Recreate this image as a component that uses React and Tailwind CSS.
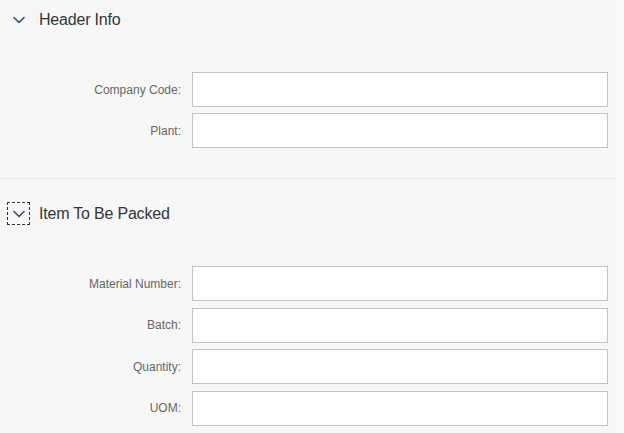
import React from 'react';

const Chevron = () => (
  <svg width="12" height="8" viewBox="0 0 12 8" fill="none">
    <path d="M1 1.5 L6 6.5 L11 1.5" stroke="#32507a" strokeWidth="1.6" strokeLinecap="round" strokeLinejoin="round" />
  </svg>
);

const Field = ({ label }) => (
  <div className="flex items-center h-[35px]">
    <label className="w-[182px] text-right text-[12px] text-[#666666] pr-[1px]">{label}</label>
    <input
      type="text"
      className="ml-[10px] w-[416px] h-[35px] bg-white border border-[#c4c4c4] outline-none"
    />
  </div>
);

const Section = ({ title, fields, focused, top, gap, bottomBorder }) => (
  <div className={`${top} ${bottomBorder ? 'pb-[30px] border-b border-[#e8e8e8]' : ''}`}>
    <div className="flex items-center h-[23px]">
      <button
        className={`ml-[7px] w-[23px] h-[23px] flex items-center justify-center ${focused ? 'border border-dashed border-[#333]' : 'border border-transparent'}`}
      >
        <Chevron />
      </button>
      <span className="ml-[9px] text-[16px] text-[#32363a] tracking-[-0.2px]">{title}</span>
    </div>
    <div className={`mt-[41px] flex flex-col ${gap}`}>
      {fields.map((f) => (
        <Field key={f} label={f} />
      ))}
    </div>
  </div>
);

export default function App() {
  return (
    <div
      className="w-[624px] h-[433px] overflow-hidden bg-[#f7f7f7] flex"
      style={{ fontFamily: '"Liberation Sans", Arial, sans-serif' }}
    >
      <div className="w-[616px]">
        <Section
          title="Header Info"
          fields={['Company Code:', 'Plant:']}
          top="pt-[8px]"
          gap="gap-[6px]"
          bottomBorder
        />
        <Section
          title="Item To Be Packed"
          fields={['Material Number:', 'Batch:', 'Quantity:', 'UOM:']}
          top="pt-[23px]"
          gap="gap-[6.67px]"
          focused
        />
      </div>
      <div className="flex-1 bg-[#fafafa]" />
    </div>
  );
}
